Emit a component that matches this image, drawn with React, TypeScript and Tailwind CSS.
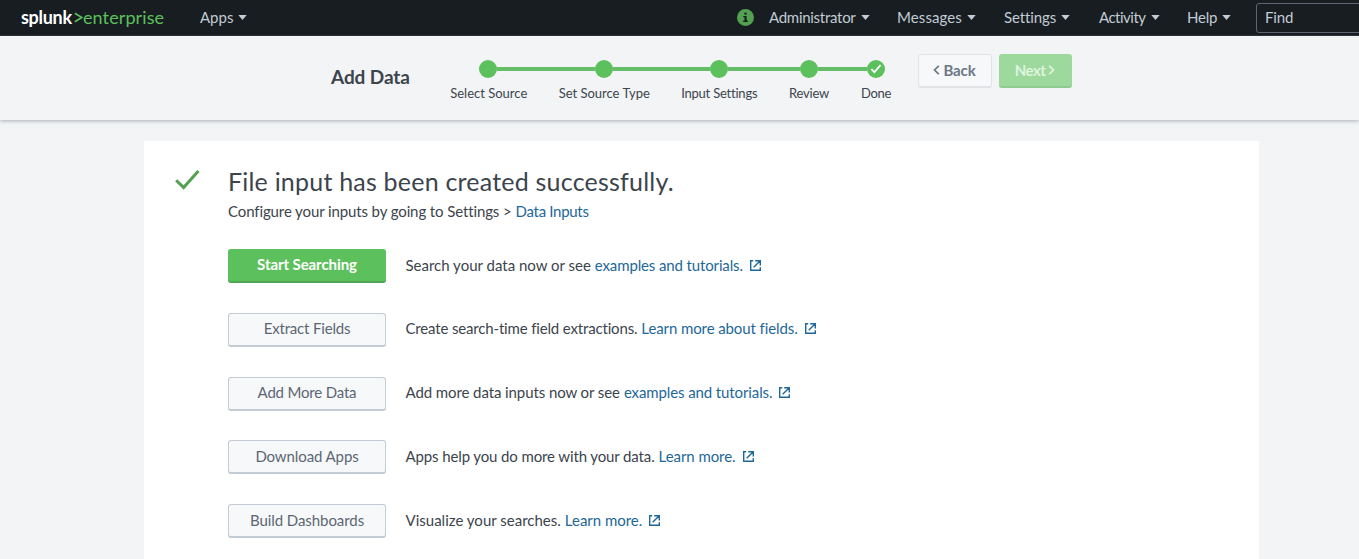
import type { ReactNode } from "react";

const steps = [
  { label: "Select Source", width: "w-[108.5px]", tracking: "tracking-[0px]" },
  { label: "Set Source Type", width: "w-[122.5px]", tracking: "tracking-[-0.01px]" },
  { label: "Input Settings", width: "w-[107.5px]", tracking: "tracking-[-0.22px]" },
  { label: "Review", width: "w-[72px]", tracking: "tracking-[-0.2px]" },
  { label: "Done", width: "w-[62px]", tracking: "tracking-[-0.3px]" },
];

const menus = [
  { label: "Administrator", width: "w-[128px]", tracking: "tracking-[-0.28px]" },
  { label: "Messages", width: "w-[107px]", tracking: "tracking-[0.1px]" },
  { label: "Settings", width: "w-[95px]", tracking: "tracking-[-0.1px]" },
  { label: "Activity", width: "w-[88px]", tracking: "tracking-[-0.5px]" },
  { label: "Help", width: "w-[69px]", tracking: "tracking-[-0.2px]" },
];

const actions = [
  { button: "Start Searching", bt: "tracking-[-0.08px]", text: "Search your data now or see", tt: "tracking-[0px]", link: "examples and tutorials.", lt: "tracking-[-0.13px]", primary: true },
  { button: "Extract Fields", bt: "tracking-[-0.18px]", text: "Create search-time field extractions.", tt: "tracking-[-0.16px]", link: "Learn more about fields.", lt: "tracking-[-0.1px]" },
  { button: "Add More Data", bt: "tracking-[-0.18px]", text: "Add more data inputs now or see", tt: "tracking-[-0.09px]", link: "examples and tutorials.", lt: "tracking-[-0.11px]" },
  { button: "Download Apps", bt: "tracking-[-0.1px]", text: "Apps help you do more with your data.", tt: "tracking-[-0.12px]", link: "Learn more.", lt: "tracking-[-0.06px]" },
  { button: "Build Dashboards", bt: "tracking-[-0.07px]", text: "Visualize your searches.", tt: "tracking-[0.01px]", link: "Learn more.", lt: "tracking-[-0.02px]" },
];

function Caret() {
  return (
    <svg className="h-[5px] w-[9px] shrink-0" viewBox="0 0 9 5" fill="#c3cbd4">
      <path d="M0.3 0H8.7L4.5 5Z" />
    </svg>
  );
}

function ExternalIcon() {
  return (
    <svg className="mt-px ml-[7px] h-[11px] w-[11px] shrink-0" viewBox="0 0 11 11" fill="none" stroke="#1e6799" strokeWidth="1.4">
      <path d="M3.2 0.7H0.7V10.3H10.3V7.2M5.2 0.7H10.3V5.6M10 1L3.7 7.3" />
    </svg>
  );
}

function Link({ children, className }: { children: ReactNode; className: string }) {
  return <a className={`text-[#1e6799] ${className}`}>{children}</a>;
}

export default function App() {
  return (
    <div className="h-[559px] w-full overflow-hidden bg-[#f2f4f5] font-['Lato',sans-serif] text-[15px] leading-5 text-[#3c444d]">
      <nav className="flex h-9 items-center overflow-hidden border-b border-[#2b3037] bg-[#171d21] pb-px text-[#c3cbd4]">
        <div className="ml-[21px] flex w-[179px] shrink-0 items-center text-[18px]">
          <span className="w-[52px] font-bold tracking-[-0.3px] text-white">splunk</span>
          <svg className="mt-px ml-px h-[11px] w-[9px]" viewBox="0 0 9 11" fill="none" stroke="#5cc05c" strokeWidth="1.6">
            <path d="M0.8 1.2L7.8 5.5L0.8 9.8" />
          </svg>
          <span className="tracking-[0.1px] text-[#5cc05c]">enterprise</span>
        </div>
        <div className="flex w-[537px] shrink-0 items-center gap-[5px]">
          Apps
          <Caret />
        </div>
        <svg className="mt-px mr-[15px] h-[17px] w-[17px] shrink-0" viewBox="0 0 17 17">
          <circle cx="8.5" cy="8.5" r="8.5" fill="#53a051" />
          <path d="M7.3 3.7H9.7V5.6H7.3ZM6.3 7H9.6V11.5H10.8V12.9H6.2V11.5H7.5V8.3H6.3Z" fill="#171d21" />
        </svg>
        {menus.map((m) => (
          <div key={m.label} className={`flex shrink-0 items-center gap-[5px] ${m.width}`}>
            <span className={m.tracking}>{m.label}</span>
            <Caret />
          </div>
        ))}
        <div className="mt-px flex h-[30px] w-[160px] shrink-0 items-center rounded-[3px] border border-[#5c6773] px-2 pb-0.5 tracking-[-0.1px]">
          Find
        </div>
      </nav>

      <header className="relative flex h-[84px] bg-[#f2f4f5] shadow-[0_1px_4px_rgba(60,75,90,0.4)]">
        <h1 className="ml-[331px] mt-[29px] w-[104px] shrink-0 text-[19px] leading-6 font-bold tracking-[-0.1px]">Add Data</h1>
        <ol className="mt-6 -ml-px flex text-[13px]">
          {steps.map((s, i) => (
            <li key={s.label} className={`flex shrink-0 flex-col items-center ${s.width}`}>
              <div className="flex w-full items-center">
                <span className={`h-1 flex-1 ${i ? "bg-[#65bd68]" : "bg-transparent"}`} />
                <span className="flex size-[18px] items-center justify-center rounded-full bg-[#5cc05c]">
                  {i === 4 && (
                    <svg className="h-[10px] w-3" viewBox="0 0 12 10" fill="none" stroke="white" strokeWidth="1.8">
                      <path d="M1.4 5.2L4.4 8.2L10.6 1" />
                    </svg>
                  )}
                </span>
                <span className={`h-1 flex-1 ${i < 4 ? "bg-[#65bd68]" : "bg-transparent"}`} />
              </div>
              <span className={`mt-[5px] ml-px whitespace-nowrap ${s.tracking}`}>{s.label}</span>
            </li>
          ))}
        </ol>
        <div className="ml-[11px] mt-[18px] flex gap-[7px] font-bold">
          <button className="flex h-[34px] w-[74px] items-center justify-center gap-[3px] rounded-[3px] border border-b-2 border-[#e1e4e7] bg-[#f7f8fa] pb-px tracking-[-0.1px] text-[#6b7785]">
            <svg className="h-[10px] w-[7px]" viewBox="0 0 7 10" fill="none" stroke="currentColor" strokeWidth="1.7">
              <path d="M5.8 0.8L1.5 5L5.8 9.2" />
            </svg>
            Back
          </button>
          <button className="flex h-[34px] w-[73px] items-center justify-center gap-[3px] rounded-[3px] border-b-2 border-[#8fcb91] bg-[#9dd99d] tracking-[-0.5px] text-[#dff4df]">
            Next
            <svg className="h-[10px] w-[7px]" viewBox="0 0 7 10" fill="none" stroke="currentColor" strokeWidth="1.7">
              <path d="M1.2 0.8L5.5 5L1.2 9.2" />
            </svg>
          </button>
        </div>
      </header>

      <main className="ml-[144px] mt-[21px] flex h-[430px] w-[1115px] bg-white pl-[31px]">
        <svg className="mt-[28px] h-[23px] w-[25px] shrink-0" viewBox="0 0 25 23" fill="none" stroke="#53a051" strokeWidth="3">
          <path d="M1.2 11.2L8.6 18.6L23.4 2" />
        </svg>
        <section className="ml-[28px]">
          <h2 className="mt-[24px] text-[25px] leading-8 tracking-[0.21px]">File input has been created successfully.</h2>
          <p className="mt-[4px] flex gap-1">
            <span className="tracking-[-0.11px]">Configure your inputs by going to Settings &gt;</span>
            <Link className="tracking-[-0.3px]">Data Inputs</Link>
          </p>
          <div className="mt-[28px] flex flex-col gap-[29.75px]">
            {actions.map((a) => (
              <div key={a.button} className="flex h-[34px] items-center">
                <button
                  className={`h-[34px] w-[158px] rounded-[3px] pb-0.5 ${a.bt} ${
                    a.primary
                      ? "border-b-2 border-[#4fa551] bg-[#5cc05c] font-bold text-white"
                      : "border border-[#c3cbd4] border-b-2 bg-[#f7f8fa] text-[#5c6773]"
                  }`}
                >
                  {a.button}
                </button>
                <p className="-mt-[3px] ml-[19.5px] flex items-center">
                  <span className={`mr-1 ${a.tt}`}>{a.text}</span>
                  <Link className={a.lt}>{a.link}</Link>
                  <ExternalIcon />
                </p>
              </div>
            ))}
          </div>
        </section>
      </main>
    </div>
  );
}
